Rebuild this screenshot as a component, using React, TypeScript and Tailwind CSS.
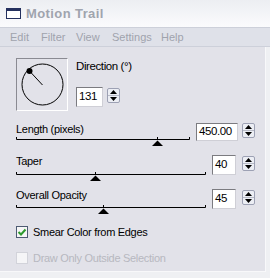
import React from 'react';

const font = "font-['Liberation_Sans',Arial,sans-serif]";

function Spinner() {
  return (
    <div className="w-[13px] h-[15px] flex flex-col border border-[#9da1b4] rounded-[2px] bg-[#eceef4] overflow-hidden">
      <div className="flex-1 flex items-center justify-center border-b border-[#b9bcc8]">
        <svg width="7" height="4" viewBox="0 0 7 4">
          <path d="M0 4 L3.5 0 L7 4 Z" fill="#000" />
        </svg>
      </div>
      <div className="flex-1 flex items-center justify-center">
        <svg width="7" height="4" viewBox="0 0 7 4">
          <path d="M0 0 L3.5 4 L7 0 Z" fill="#000" />
        </svg>
      </div>
    </div>
  );
}

function NumberBox({ value, w, h }: { value: string; w: number; h: number }) {
  return (
    <div
      className="bg-white border border-t-[#7b7b80] border-l-[#7b7b80] border-r-[#cfcfd6] border-b-[#cfcfd6] flex items-center pl-[2px] text-[11.5px] tracking-[-0.4px] text-black"
      style={{ width: w, height: h }}
    >
      {value}
    </div>
  );
}

// slider track: line with end ticks and a triangle thumb
function Track({ width, thumb }: { width: number; thumb: number }) {
  return (
    <svg width={width} height="10" viewBox={`0 0 ${width} 10`} className="block">
      <path d={`M0.5 1 V3.5 H${width - 0.5} V1`} stroke="#000" strokeWidth="1" fill="none" />
      <path d={`M${thumb + 0.5} 1 V3.5`} stroke="#000" strokeWidth="1" />
      <path d={`M${thumb - 5} 10 L${thumb + 0.5} 4.5 L${thumb + 6} 10 Z`} fill="#000" />
    </svg>
  );
}

function SliderRow({
  label,
  value,
  lineW,
  thumb,
  trackMt,
  inputW,
  inputH,
  spinMl,
  rowH,
}: {
  label: string;
  value: string;
  lineW: number;
  thumb: number;
  trackMt: string;
  inputW: number;
  inputH: number;
  spinMl: string;
  rowH: string;
}) {
  return (
    <div className={`flex items-start ${rowH}`}>
      <div className="flex-1">
        <div className="leading-[13px] text-[11px] tracking-[-0.3px] text-black">{label}</div>
        <div className={trackMt}>
          <Track width={lineW} thumb={thumb} />
        </div>
      </div>
      <div className="ml-[6px]">
        <NumberBox value={value} w={inputW} h={inputH} />
      </div>
      <div className={spinMl}>
        <Spinner />
      </div>
    </div>
  );
}

export default function App() {
  return (
    <div className={`w-[270px] h-[278px] bg-[#eff0f3] flex flex-col ${font} overflow-hidden`}>
      {/* Title bar */}
      <div className="h-[27px] bg-gradient-to-b from-[#eceef2] to-[#fbfbfd] flex items-center pl-[6px] gap-[5px]">
        <svg width="15" height="11" viewBox="0 0 15 11">
          <rect x="0.5" y="0.5" width="14" height="10" fill="#fff" stroke="#24305e" />
          <rect x="0" y="0" width="15" height="3" fill="#24305e" />
        </svg>
        <span className="text-[13px] font-bold text-[#a0a4ae] tracking-[0.4px]">Motion Trail</span>
      </div>

      {/* Menu bar */}
      <div className="h-[20px] bg-[#dfe1e9] border-t border-b border-[#cdd0da] flex items-center pl-[10px] text-[11px] text-[#9fa3ad]">
        <span className="w-[31px]">Edit</span>
        <span className="w-[35px]">Filter</span>
        <span className="w-[36px]">View</span>
        <span className="w-[49px]">Settings</span>
        <span>Help</span>
      </div>

      {/* Body */}
      <div className="w-[266px] bg-[#e2e2e9] border-r border-b border-[#f8f8fa] pl-[16px] pr-[11px] pt-[11px] pb-[7px]">
        <div className="flex items-start">
          <div className="w-[52px] h-[53px] border border-t-[#8a8a92] border-l-[#8a8a92] border-r-white border-b-white">
            <svg width="50" height="51" viewBox="0 0 50 51" className="block">
              <circle cx="25.5" cy="25.5" r="20.5" fill="none" stroke="#000" strokeWidth="1" />
              <line x1="12.5" y1="12" x2="25.5" y2="26" stroke="#000" strokeWidth="1" />
              <circle cx="12.5" cy="12" r="3" fill="#000" />
            </svg>
          </div>
          <div className="ml-[8px] pt-[2px]">
            <div className="leading-[13px] text-[11.5px] tracking-[-0.4px] text-black">Direction (°)</div>
            <div className="flex items-start mt-[14px]">
              <NumberBox value="131" w={27} h={20} />
              <div className="ml-[4px] mt-[1px]">
                <Spinner />
              </div>
            </div>
          </div>
        </div>

        <div className="mt-[12px]">
          <SliderRow label="Length (pixels)" value="450.00" lineW={174} thumb={141} trackMt="mt-0" inputW={42} inputH={18} spinMl="ml-[4px]" rowH="h-[32px]" />
          <SliderRow label="Taper" value="40" lineW={190} thumb={79} trackMt="mt-[3px]" inputW={24} inputH={20} spinMl="ml-[6px] mt-[1px]" rowH="h-[34px]" />
          <SliderRow label="Overall Opacity" value="45" lineW={190} thumb={87} trackMt="mt-[2px]" inputW={24} inputH={20} spinMl="ml-[6px] mt-[1px]" rowH="h-[37px]" />
        </div>

        <div className="flex items-center h-[12px] gap-[5px]">
          <div className="w-[12px] h-[12px] border border-[#4d5b72] bg-[#f6f6f6] flex items-center justify-center">
            <svg width="10" height="10" viewBox="0 0 10 10">
              <path d="M1.5 5 L4 7.5 L8.5 2.5" stroke="#2d9a2d" strokeWidth="2" fill="none" />
            </svg>
          </div>
          <span className="text-[11px] tracking-[-0.3px] text-black leading-[13px]">Smear Color from Edges</span>
        </div>

        <div className="flex items-center h-[12px] gap-[5px] mt-[14px]">
          <div className="w-[12px] h-[12px] border border-[#d2d3da] bg-[#f5f5f7]" />
          <span className="text-[11px] tracking-[-0.3px] text-[#b7b8c0] leading-[13px]">Draw Only Outside Selection</span>
        </div>
      </div>
    </div>
  );
}
